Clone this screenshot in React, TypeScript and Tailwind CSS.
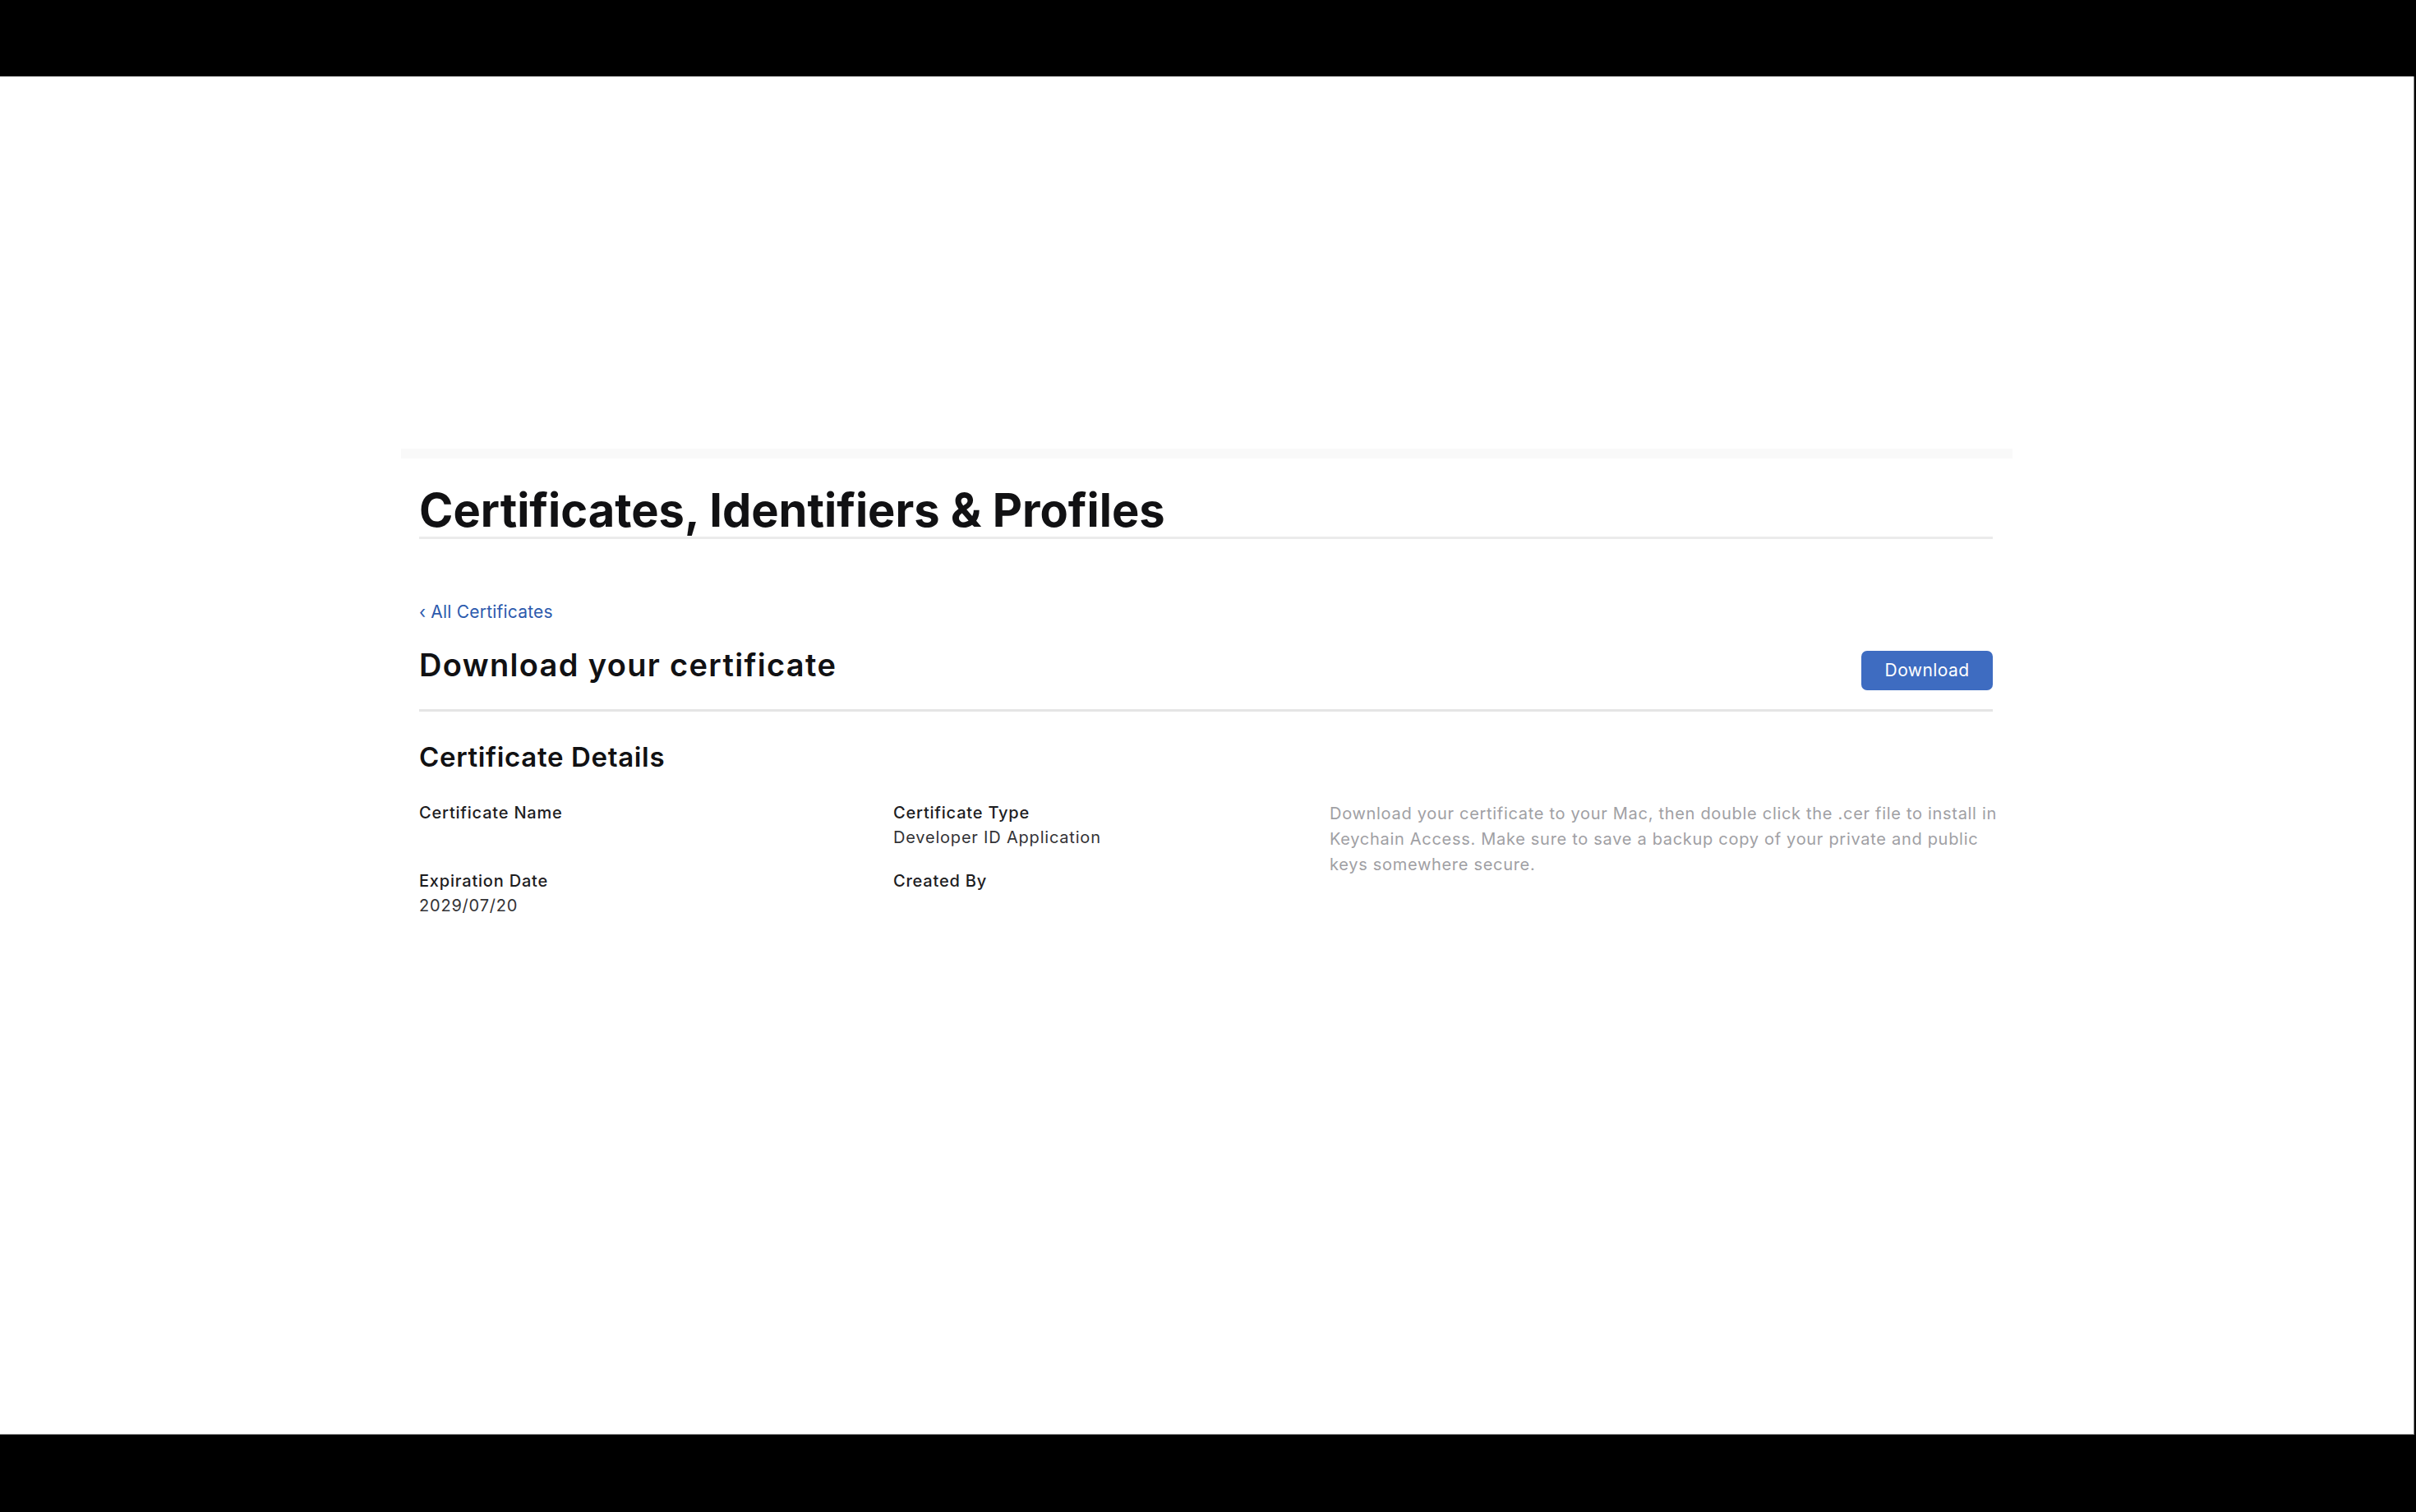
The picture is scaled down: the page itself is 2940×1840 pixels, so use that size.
import React from 'react'

const font = { fontFamily: 'Inter, "Noto Sans", "Liberation Sans", sans-serif' }

function Field({ label, value }: { label: string; value?: string }) {
  return (
    <div className="flex flex-col tracking-[0.05em]">
      <span className="text-[20px] leading-[30px] font-medium text-[#1d1d1f]">{label}</span>
      <span className="text-[20px] leading-[30px] text-[#333336] h-[30px]">{value}</span>
    </div>
  )
}

export default function App() {
  return (
    <div className="w-[2940px] h-[1840px] bg-black flex flex-col" style={font}>
      {/* top bar of the screen */}
      <div className="h-[93px] shrink-0" />

      {/* browser page */}
      <div className="w-[2938px] h-[1653px] bg-white border-r border-b border-[#8a8a8a]">
        <div className="ml-[488px] w-[1961px] mt-[453px]">
          <div className="h-[12px] bg-[#f9f9f9]" />

          <div className="pl-[22px] pr-[24px]">
            {/* Page title */}
            <h1 className="mt-[35px] text-[56px] leading-[56px] font-bold text-[#111113] pb-[4px] border-b-[3px] border-[#ebebeb]">
              Certificates, Identifiers &amp; Profiles
            </h1>

            {/* Back link */}
            <a className="block mt-[79px] text-[21px] leading-[20px] tracking-[0.01em] text-[#2c5aad]">
              <span className="mr-[6px]">‹</span>All Certificates
            </a>

            {/* Heading row */}
            <div className="mt-[36px] flex justify-between items-start pb-[23px] border-b-[3px] border-[#e5e5e5]">
              <h2 className="text-[38px] leading-[36px] font-semibold tracking-[0.035em] text-[#111113]">
                Download your certificate
              </h2>
              <button className="mt-[1px] w-[160px] h-[48px] rounded-[7px] bg-[#3e6cc1] text-white text-[21px] tracking-[0.02em]">
                Download
              </button>
            </div>

            <h3 className="mt-[39px] text-[33px] leading-[32px] font-semibold tracking-[0.02em] text-[#111113]">
              Certificate Details
            </h3>

            {/* Details */}
            <div className="mt-[37px] flex">
              <div className="w-[577px] shrink-0 flex flex-col gap-[23px]">
                <Field label="Certificate Name" />
                <Field label="Expiration Date" value="2029/07/20" />
              </div>
              <div className="w-[531px] shrink-0 flex flex-col gap-[23px]">
                <Field label="Certificate Type" value="Developer ID Application" />
                <Field label="Created By" />
              </div>
              <p className="mt-[1px] flex-1 text-[20px] leading-[31px] tracking-[0.035em] text-[#a0a0a4] whitespace-nowrap">
                Download your certificate to your Mac, then double click the .cer file to install in
                <br />
                Keychain Access. Make sure to save a backup copy of your private and public
                <br />
                keys somewhere secure.
              </p>
            </div>
          </div>
        </div>
      </div>
    </div>
  )
}
